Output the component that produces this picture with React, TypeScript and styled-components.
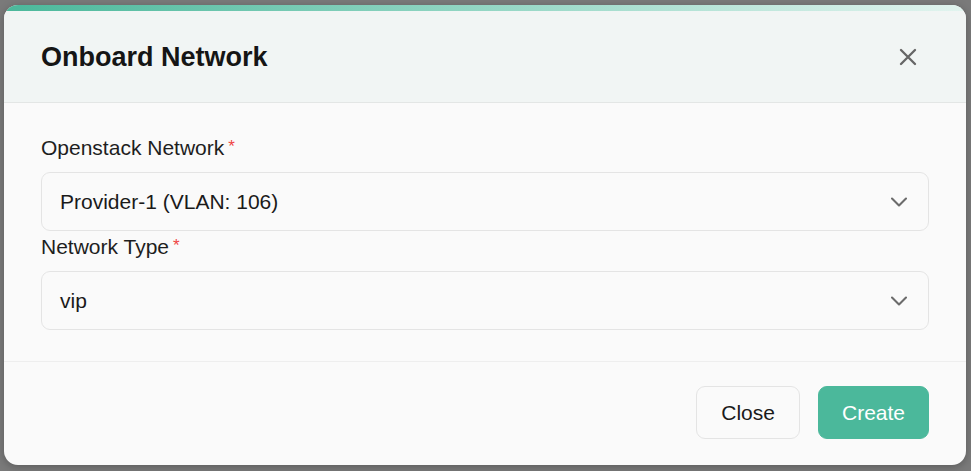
import React from "react";
import styled, { createGlobalStyle } from "styled-components";

const GlobalStyle = createGlobalStyle`
  html, body {
    margin: 0;
    padding: 0;
    background: #7a7a7a;
    font-family: "Liberation Sans", Arial, sans-serif;
  }
`;

const Backdrop = styled.div`
  width: 971px;
  height: 471px;
  padding: 5px 0 0 4px;
  box-sizing: border-box;
  background: #7a7a7a;
`;

const Modal = styled.div`
  width: 962px;
  height: 460px;
  border-radius: 14px;
  overflow: hidden;
  background: #fafafa;
  box-shadow: 0 2px 8px rgba(0, 0, 0, 0.25);
  display: flex;
  flex-direction: column;
`;

const AccentBar = styled.div`
  height: 6px;
  flex-shrink: 0;
  background: linear-gradient(90deg, #4bb89b 0%, #9bd9c8 55%, #e2f4ef 100%);
`;

const Header = styled.div`
  height: 92px;
  box-sizing: border-box;
  padding: 0 37px;
  display: flex;
  align-items: center;
  justify-content: space-between;
  background: #f1f5f4;
  border-bottom: 1px solid #e3e6e5;
`;

const Title = styled.h2`
  margin: 0;
  padding-top: 2px;
  font-size: 27px;
  font-weight: 700;
  color: #151515;
`;

const IconButton = styled.button`
  width: 30px;
  height: 30px;
  margin-right: 6px;
  padding: 0;
  border: none;
  background: transparent;
  display: grid;
  place-items: center;
  color: #666;
  cursor: pointer;
`;

const Body = styled.div`
  padding: 32px 37px 31px;
  border-bottom: 1px solid #eeeeee;
`;

const Field = styled.div`
  display: flex;
  flex-direction: column;
  & + & {
    margin-top: 3px;
  }
`;

const Label = styled.label`
  font-size: 21px;
  line-height: 26px;
  color: #1e1e1e;
  margin-bottom: 11px;
`;

const Required = styled.span`
  color: #ef4444;
  font-size: 17px;
  margin-left: 4px;
  vertical-align: top;
  position: relative;
  top: -1px;
`;

const Select = styled.div`
  height: 59px;
  box-sizing: border-box;
  border: 1px solid #e4e4e4;
  border-radius: 9px;
  background: #fafafa;
  padding: 0 15px 0 18px;
  display: flex;
  align-items: center;
  justify-content: space-between;
  font-size: 21px;
  color: #1a1a1a;
`;

const Chevron = styled.svg`
  width: 28px;
  height: 28px;
  color: #6b6b6b;
`;

const Footer = styled.div`
  flex: 1;
  padding: 24px 37px 0;
  display: flex;
  justify-content: flex-end;
  align-items: flex-start;
  gap: 18px;
`;

const Button = styled.button<{ $primary?: boolean }>`
  height: 53px;
  padding: 0 ${(p) => (p.$primary ? "23px" : "24px")};
  border-radius: 9px;
  font-family: "Liberation Sans", Arial, sans-serif;
  font-size: 21px;
  cursor: pointer;
  border: 1px solid ${(p) => (p.$primary ? "#4bb89b" : "#e4e4e4")};
  background: ${(p) => (p.$primary ? "#4bb89b" : "#fafafa")};
  color: ${(p) => (p.$primary ? "#ffffff" : "#1a1a1a")};
`;

const ChevronDown = () => (
  <Chevron viewBox="0 0 24 24" fill="none" stroke="currentColor" strokeWidth="1.8" strokeLinecap="round" strokeLinejoin="round">
    <path d="m6 9 6 6 6-6" />
  </Chevron>
);

const fields = [
  { id: "network", label: "Openstack Network", value: "Provider-1 (VLAN: 106)" },
  { id: "type", label: "Network Type", value: "vip" },
];

const App = () => (
  <>
    <GlobalStyle />
    <Backdrop>
      <Modal>
        <AccentBar />
        <Header>
          <Title>Onboard Network</Title>
          <IconButton aria-label="Close">
            <svg width="28" height="28" viewBox="0 0 24 24" fill="none" stroke="currentColor" strokeWidth="2" strokeLinecap="round">
              <path d="M18 6 6 18M6 6l12 12" />
            </svg>
          </IconButton>
        </Header>
        <Body>
          {fields.map((f) => (
            <Field key={f.id}>
              <Label>
                {f.label}
                <Required>*</Required>
              </Label>
              <Select>
                {f.value}
                <ChevronDown />
              </Select>
            </Field>
          ))}
        </Body>
        <Footer>
          <Button>Close</Button>
          <Button $primary>Create</Button>
        </Footer>
      </Modal>
    </Backdrop>
  </>
);

export default App;
